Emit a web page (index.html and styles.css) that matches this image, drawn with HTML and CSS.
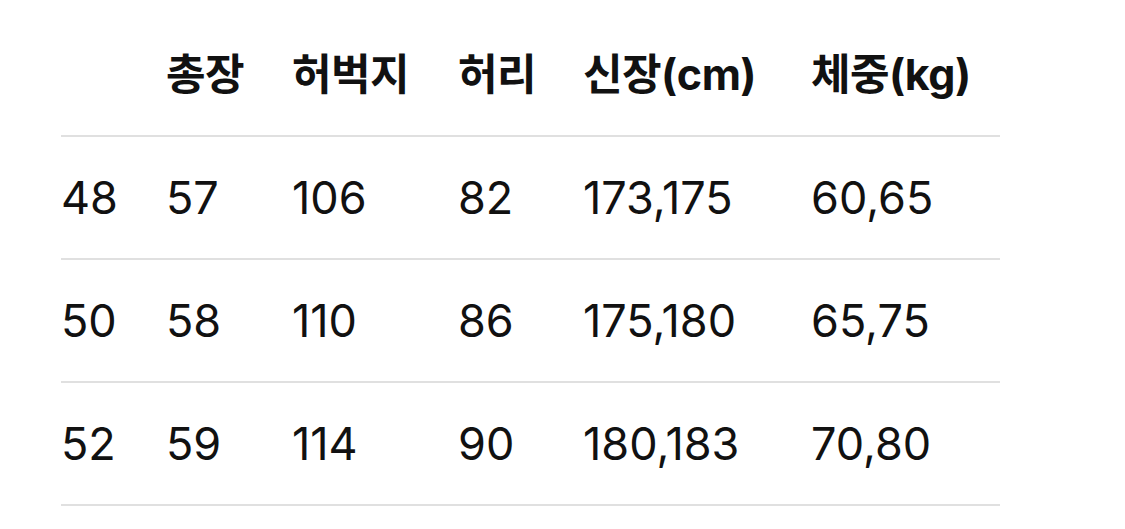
FILE: index.html
```html
<!DOCTYPE html>
<html lang="ko">
<head>
<meta charset="utf-8">
<link rel="stylesheet" href="styles.css">
</head>
<body>
<div class="table">
  <div class="row head">
    <div class="cell"></div>
    <div class="cell">총장</div>
    <div class="cell">허벅지</div>
    <div class="cell">허리</div>
    <div class="cell">신장(cm)</div>
    <div class="cell">체중(kg)</div>
  </div>
  <div class="row">
    <div class="cell">48</div>
    <div class="cell">57</div>
    <div class="cell">106</div>
    <div class="cell">82</div>
    <div class="cell">173,175</div>
    <div class="cell">60,65</div>
  </div>
  <div class="row">
    <div class="cell">50</div>
    <div class="cell">58</div>
    <div class="cell">110</div>
    <div class="cell">86</div>
    <div class="cell">175,180</div>
    <div class="cell">65,75</div>
  </div>
  <div class="row">
    <div class="cell">52</div>
    <div class="cell">59</div>
    <div class="cell">114</div>
    <div class="cell">90</div>
    <div class="cell">180,183</div>
    <div class="cell">70,80</div>
  </div>
</div>
</body>
</html>
```
FILE: styles.css
```css
html, body {
  margin: 0;
  padding: 0;
  background: #ffffff;
}
body {
  font-family: Inter, "Noto Sans CJK KR", sans-serif;
  color: #111111;
  font-size: 45px;
}
.table {
  width: 939px;
  margin: 14px 0 0 61px;
}
.row {
  display: grid;
  grid-template-columns: 105px 126px 166px 125px 228px 189px;
  height: 121px;
  align-items: center;
  border-bottom: 2px solid #e0e0e0;
}
.cell {
  line-height: 1;
  white-space: nowrap;
}
.head .cell {
  font-weight: 700;
  font-size: 43px;
  letter-spacing: -0.5px;
}
```
